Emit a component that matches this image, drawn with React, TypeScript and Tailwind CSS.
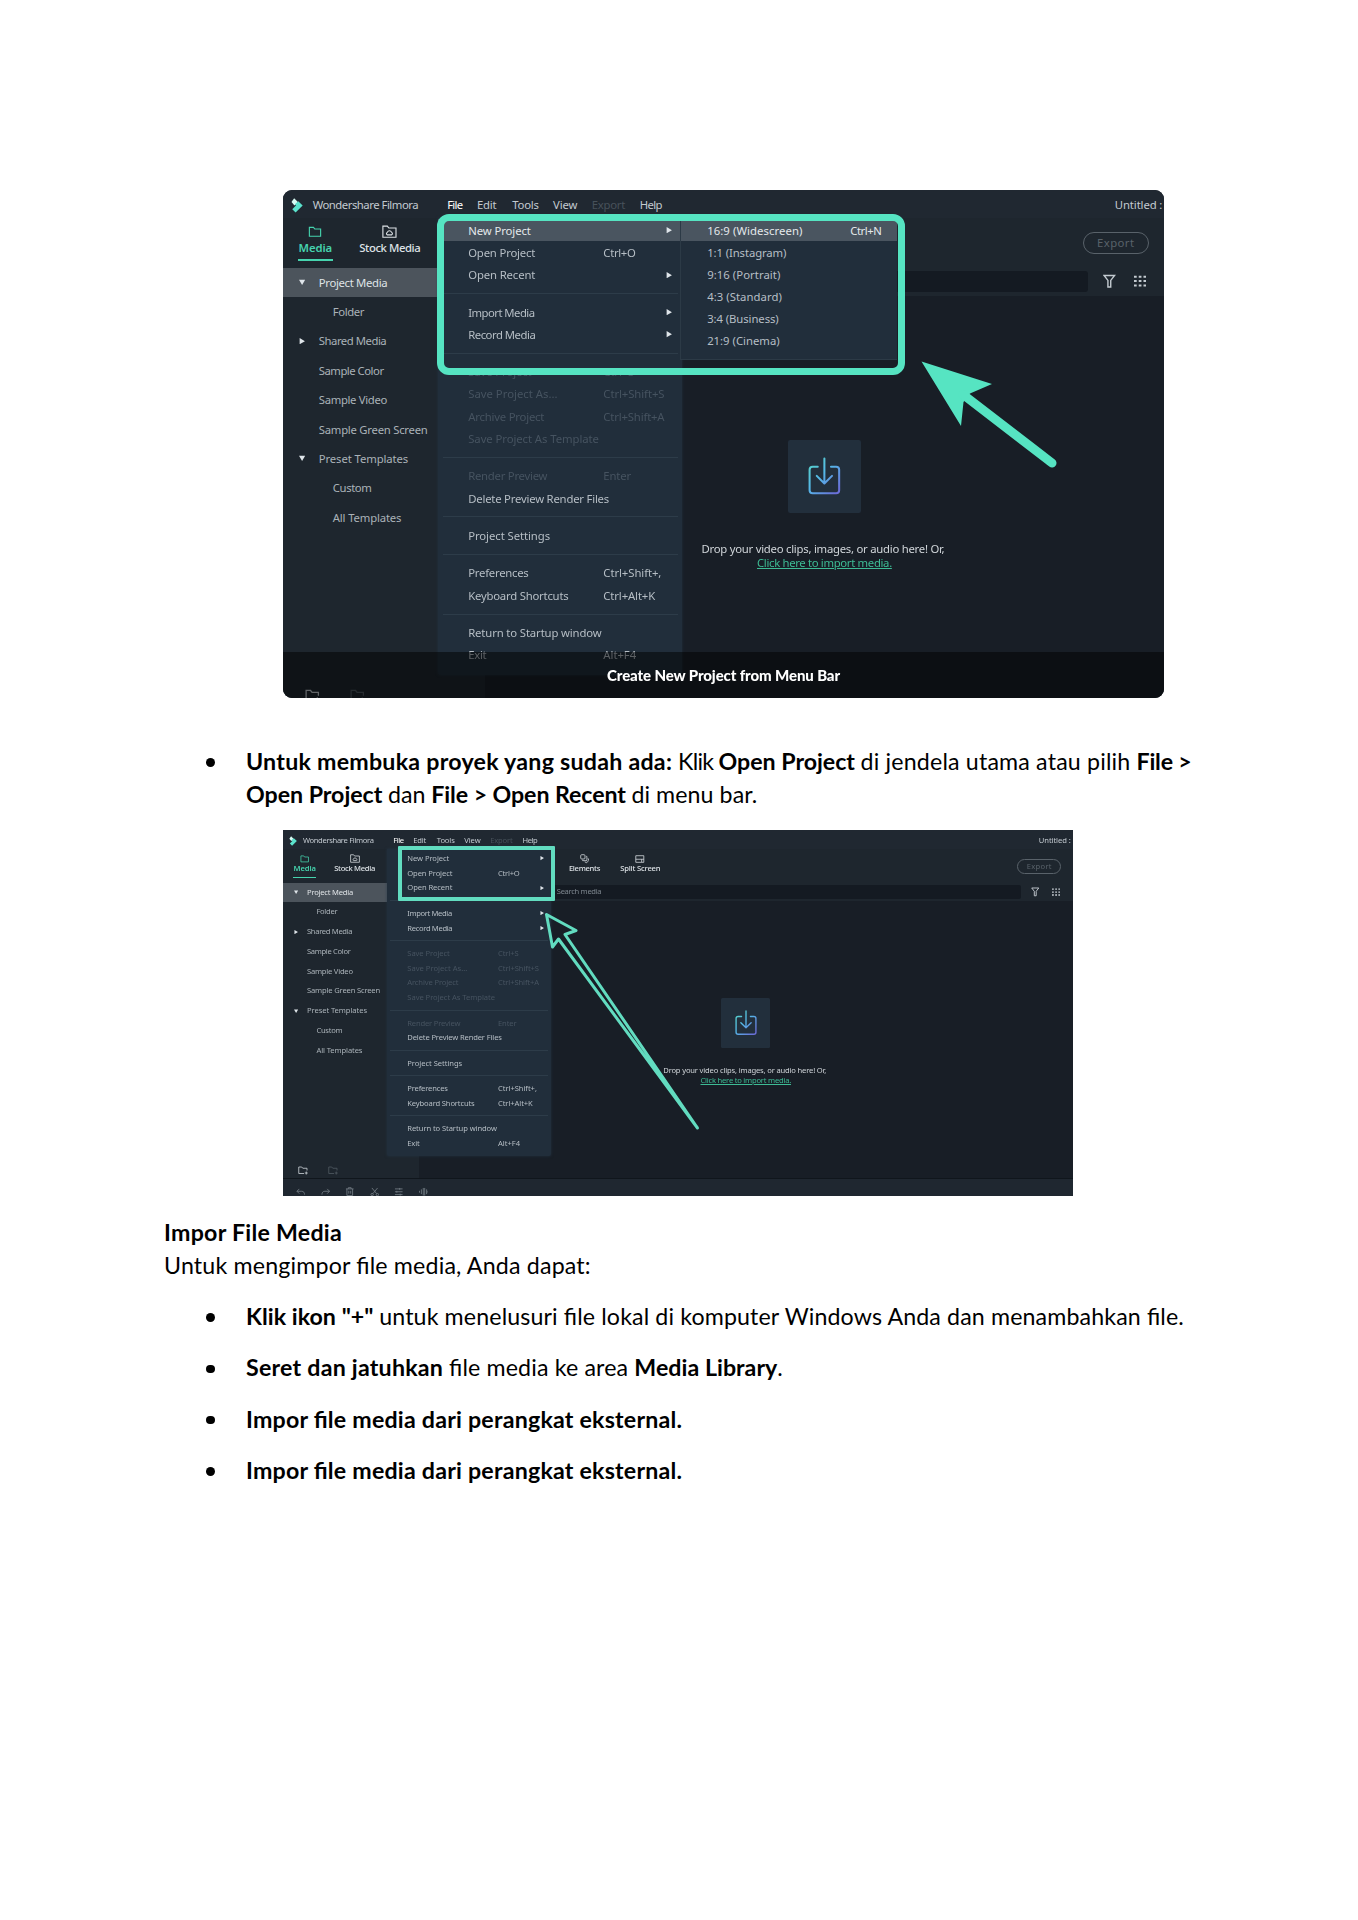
import React, { useLayoutEffect, useRef } from "react";

/* Text tracked so that it fills a width of `w` tenths of the parent's em. */
function Fit({ w, className = "", children }: { w: number; className?: string; children: string }) {
  const ref = useRef<HTMLSpanElement>(null);
  useLayoutEffect(() => {
    const el = ref.current;
    if (!el || !el.parentElement) return;
    const em = parseFloat(getComputedStyle(el.parentElement).fontSize);
    el.style.letterSpacing = "0px";
    const natural = el.getBoundingClientRect().width;
    el.style.letterSpacing = `${((w * em) / 10 - natural) / children.length}px`;
  }, [w, children]);
  return (
    <span ref={ref} className={`inline-block shrink-0 whitespace-pre ${className}`}>
      {children}
    </span>
  );
}

const UI = "text-[0.76em] leading-none";

type Entry = { label: string; w: number; keys?: string; kw?: number; sub?: boolean; dim?: boolean };

const MENU: Entry[][] = [
  [
    { label: "New Project", w: 42, sub: true },
    { label: "Open Project", w: 45, keys: "Ctrl+O", kw: 21.5 },
    { label: "Open Recent", w: 45, sub: true },
  ],
  [
    { label: "Import Media", w: 44.5, sub: true },
    { label: "Record Media", w: 45, sub: true },
  ],
  [
    { label: "Save Project", w: 42.5, keys: "Ctrl+S", kw: 20.7, dim: true },
    { label: "Save Project As...", w: 60, keys: "Ctrl+Shift+S", kw: 41, dim: true },
    { label: "Archive Project", w: 51, keys: "Ctrl+Shift+A", kw: 41, dim: true },
    { label: "Save Project As Template", w: 87.7, dim: true },
  ],
  [
    { label: "Render Preview", w: 53, keys: "Enter", kw: 18.5, dim: true },
    { label: "Delete Preview Render Files", w: 94.5 },
  ],
  [{ label: "Project Settings", w: 54.9 }],
  [
    { label: "Preferences", w: 40.5, keys: "Ctrl+Shift+,", kw: 38.9 },
    { label: "Keyboard Shortcuts", w: 67.3, keys: "Ctrl+Alt+K", kw: 34.7 },
  ],
  [
    { label: "Return to Startup window", w: 89.5 },
    { label: "Exit", w: 12.2, keys: "Alt+F4", kw: 22 },
  ],
];

const RATIOS: Entry[] = [
  { label: "16:9 (Widescreen)", w: 64, keys: "Ctrl+N", kw: 21 },
  { label: "1:1 (Instagram)", w: 53.2 },
  { label: "9:16 (Portrait)", w: 49.2 },
  { label: "4:3 (Standard)", w: 50.2 },
  { label: "3:4 (Business)", w: 48 },
  { label: "21:9 (Cinema)", w: 48.7 },
];

const TREE: { label: string; w: number; mark?: "down" | "right"; deep?: boolean }[] = [
  { label: "Project Media", w: 46, mark: "down" },
  { label: "Folder", w: 20.9, deep: true },
  { label: "Shared Media", w: 45.3, mark: "right" },
  { label: "Sample Color", w: 43.5 },
  { label: "Sample Video", w: 45.8 },
  { label: "Sample Green Screen", w: 73 },
  { label: "Preset Templates", w: 60, mark: "down" },
  { label: "Custom", w: 26, deep: true },
  { label: "All Templates", w: 46, deep: true },
];

function Tri({ dir, className = "" }: { dir: "down" | "right"; className?: string }) {
  return (
    <svg viewBox="0 0 10 10" className={`h-[0.42em] w-[0.42em] fill-[#dfe5ea] ${className}`}>
      <path d={dir === "down" ? "M0 1h10L5 9.5z" : "M1 0v10L9.5 5z"} />
    </svg>
  );
}

function Logo() {
  return (
    <svg viewBox="0 0 16 20" className="h-[1em] w-[0.82em]">
      <path d="M4 0.5 9 5.5 4.5 10 0.5 5.5z" fill="#d8fbf3" />
      <path d="M9.5 4.5 15.5 10.2 6 19.5 1.5 15 6.5 10 5 8.5z" fill="#5be3cd" />
    </svg>
  );
}

function FolderIcon({ className, plus }: { className: string; plus?: boolean }) {
  return (
    <svg viewBox="0 0 20 18" className={className} fill="none" stroke="currentColor" strokeWidth="1.7">
      {plus ? (
        <path d="M12 15H1.5V2h6l2 2.5h8.500V9M16.500 11v6M13.500 14h6" />
      ) : (
        <path d="M1.5 15.5V2h6.2l2 2.5h8.8v11z" />
      )}
    </svg>
  );
}

function StockIcon() {
  return (
    <svg viewBox="0 0 20 18" className="h-[0.9em] w-[1em]" fill="none" stroke="currentColor" strokeWidth="1.5">
      <path d="M1.2 16.5V1.5h6l2 2.5h9.6v12.500z" />
      <path d="M7 13.200a2 2 0 0 1 .3-3.600 2.900 2.900 0 0 1 5.400 0 2 2 0 0 1 .3 3.600z" />
    </svg>
  );
}

function Tab({ label, w, children, box, active }: { label: string; w: number; children: React.ReactNode; box: string; active?: boolean }) {
  return (
    <div className={`flex h-[2.45em] shrink-0 flex-col items-center ${box} ${active ? "text-[#46d3ae]" : "text-[#dde2e6]"}`}>
      <div className="flex h-[1.02em] items-center">{children}</div>
      <div className="mt-[0.14em] flex h-[0.78em] items-center">
        <Fit w={w} className={`${UI} ${active ? "font-semibold" : "font-medium"}`}>{label}</Fit>
      </div>
      {active && <div className="mt-[0.35em] h-[0.15em] w-full shrink-0 bg-[#46d3ae]" />}
    </div>
  );
}

function FileMenu({ highlight }: { highlight: boolean }) {
  return (
    <div className={`absolute left-[10.43em] top-[1.93em] flex h-[30.7em] w-[16.35em] flex-col rounded-b-[0.2em] bg-[#212e3b] shadow-[0_0_3px_rgba(40,60,76,0.7)] ${highlight ? "pt-[0.1em]" : "pt-[0.17em]"}`}>
      {MENU.map((group, g) => (
        <React.Fragment key={g}>
          {g > 0 && (
            <div className="flex h-[1.02em] shrink-0 items-center">
              <div className="mx-[0.3em] h-px flex-1 bg-[#2d3c49]" />
            </div>
          )}
          {group.map((e, i) => (
            <div
              key={e.label}
              className={`flex h-[1.493em] shrink-0 items-center pl-[2em] ${
                highlight && g === 0 && i === 0 ? "bg-[#4a5560] text-[#e4e8eb]" : e.dim ? "text-[#465360]" : "text-[#b6bec5]"
              }`}
            >
              <div className="flex w-[9.07em] shrink-0">
                <Fit w={e.w} className={UI}>{e.label}</Fit>
              </div>
              {e.keys && <Fit w={e.kw!} className={UI}>{e.keys}</Fit>}
              {e.sub && <Tri dir="right" className="ml-[4.22em]" />}
            </div>
          ))}
        </React.Fragment>
      ))}
    </div>
  );
}

function RatioMenu() {
  return (
    <div className="absolute left-[26.62em] top-[1.93em] flex h-[9.57em] w-[14.6em] flex-col border-b border-l border-[#2c3a46] bg-[#212e3b] pt-[0.1em]">
      {RATIOS.map((e, i) => (
        <div
          key={e.label}
          className={`flex h-[1.482em] shrink-0 items-center pl-[1.78em] ${i === 0 ? "bg-[#4a5560] text-[#e4e8eb]" : "text-[#b6bec5]"}`}
        >
          <div className="flex w-[9.6em] shrink-0">
            <Fit w={e.w} className={UI}>{e.label}</Fit>
          </div>
          {e.keys && <Fit w={e.kw!} className={UI}>{e.keys}</Fit>}
        </div>
      ))}
    </div>
  );
}

function EditTool({ children }: { children: React.ReactNode }) {
  return (
    <svg viewBox="0 0 20 20" className="h-[0.95em] w-[0.95em] text-[#737c84]" fill="none" stroke="currentColor" strokeWidth="1.8">
      {children}
    </svg>
  );
}

function FilmoraWindow({ ratios, id }: { ratios: boolean; id: string }) {
  return (
    <div className="relative flex h-[36.6em] w-full flex-col bg-[#1e262e] font-['Noto_Sans','Open_Sans',sans-serif] blur-[0.35px]">
      {/* title bar */}
      <div className="flex h-[1.93em] shrink-0 items-center bg-[#202831] pl-[0.55em] pt-[0.24em] text-[#c3cad0]">
        <Logo />
        <div className="ml-[0.62em] flex w-[9.03em] shrink-0"><Fit w={70.8} className={UI}>Wondershare Filmora</Fit></div>
        <div className="flex w-[2em] shrink-0 text-white"><Fit w={10.3} className={UI}>File</Fit></div>
        <div className="flex w-[2.37em] shrink-0"><Fit w={13} className={UI}>Edit</Fit></div>
        <div className="flex w-[2.73em] shrink-0"><Fit w={17.8} className={UI}>Tools</Fit></div>
        <div className="flex w-[2.6em] shrink-0"><Fit w={16.4} className={UI}>View</Fit></div>
        <div className="flex w-[3.23em] shrink-0 text-[#47515a]"><Fit w={22.4} className={UI}>Export</Fit></div>
        <Fit w={14.8} className={UI}>Help</Fit>
        <div className={`ml-auto flex shrink-0 ${ratios ? "w-[3.3em]" : "w-[3.42em]"}`}><Fit w={31.8} className={UI}>Untitled :</Fit></div>
      </div>

      {/* tabs */}
      <div className="flex h-[3.34em] shrink-0 pt-[0.45em]">
        <Tab label="Media" w={22.5} box="ml-[1em] w-[2.34em]" active><FolderIcon className="h-[0.8em] w-[0.94em]" /></Tab>
        <Tab label="Stock Media" w={40.9} box="ml-[1.79em] w-[4.07em]"><StockIcon /></Tab>
        {!ratios && (
          <>
            <Tab label="Elements" w={31.2} box="ml-[19.4em] w-[3.1em]">
              <svg viewBox="0 0 20 20" className="h-[0.95em] w-[0.95em]" fill="none" stroke="currentColor" strokeWidth="1.6">
                <rect x="1.500" y="1.500" width="9" height="9" rx="2" />
                <path d="M13 5h1.500v9H5.500v-2M17 9l1.500 4.500-4.500 5-4-2" />
              </svg>
            </Tab>
            <Tab label="Split Screen" w={40.2} box="ml-[2.03em] w-[4em]">
              <svg viewBox="0 0 20 18" className="h-[0.85em] w-[0.96em]" fill="none" stroke="currentColor" strokeWidth="1.6">
                <path d="M1.500 1.500h17v14h-17zM1.500 9h17M14 9v6" />
              </svg>
            </Tab>
          </>
        )}
        <div className={`ml-auto mt-[0.52em] flex h-[1.47em] w-[4.4em] items-center justify-center rounded-full border-[0.12em] border-[#59626a] text-[#59626a] ${ratios ? "mr-[1.04em]" : "mr-[1.17em]"}`}>
          <Fit w={25.2} className={UI}>Export</Fit>
        </div>
      </div>

      <div className="flex min-h-0 flex-1">
        {/* media tree */}
        <div className="flex w-[13.55em] shrink-0 flex-col">
          {TREE.map((t, i) => (
            <div key={t.label} className={`flex h-[1.973em] shrink-0 items-center ${i === 0 ? "bg-[#4c545c] text-[#dfe3e6]" : "text-[#aab2b8]"}`}>
              <div className={`flex shrink-0 pl-[1.05em] ${t.deep ? "w-[3.34em]" : "w-[2.4em]"}`}>{t.mark && <Tri dir={t.mark} />}</div>
              <Fit w={t.w} className={UI}>{t.label}</Fit>
            </div>
          ))}
          <div className="mt-auto flex gap-[1.97em] pb-[0.32em] pl-[1.5em]">
            <FolderIcon plus className="h-[0.9em] w-[1em] text-[#c4cbd0]" />
            <FolderIcon plus className="h-[0.9em] w-[1em] text-[#4e5860]" />
          </div>
        </div>

        {/* library */}
        <div className="flex min-w-0 flex-1 flex-col bg-[#181e26]">
          <div className="flex h-[1.88em] shrink-0 items-center bg-[#1e262e] text-[#c3cad0]">
            <div className="flex h-[1.46em] min-w-0 flex-1 items-center rounded-[0.2em] bg-[#141a22] pl-[13.83em] text-[#7d868e]">
              {!ratios && <Fit w={44.5} className={UI}>Search media</Fit>}
            </div>
            <svg viewBox="0 0 18 20" className="ml-[1em] h-[1em] w-[0.85em]" fill="none" stroke="currentColor" strokeWidth="2">
              <path d="M1.500 1.500h15L11 8.500V18H7V8.500z" />
            </svg>
            <svg viewBox="0 0 18 18" className={`ml-[1.25em] h-[0.82em] w-[0.82em] ${ratios ? "mr-[1.18em]" : "mr-[1.33em]"}`} fill="currentColor">
              <path d="M0 1h4v3H0zM7 1h4v3H7zM14 1h4v3h-4zM0 7.500h4v3H0zM7 7.500h4v3H7zM14 7.500h4v3h-4zM0 14h4v3H0zM7 14h4v3H7zM14 14h4v3h-4z" />
            </svg>
          </div>
          <div className="flex flex-1 flex-col items-center pt-[9.68em]">
            <div className="flex h-[4.93em] w-[4.93em] shrink-0 items-center justify-center rounded-[0.15em] bg-[#222f3c]">
              <svg viewBox="0 0 32 38" className="h-[2.6em] w-[2.2em]" fill="none" strokeWidth="2" strokeLinecap="round" strokeLinejoin="round">
                <defs>
                  <linearGradient id={id} x1="0" y1="0" x2="32" y2="30" gradientUnits="userSpaceOnUse">
                    <stop offset="0" stopColor="#56d8c0" />
                    <stop offset="0.5" stopColor="#55b8e8" />
                    <stop offset="1" stopColor="#6a6fd8" />
                  </linearGradient>
                </defs>
                <g stroke={`url(#${id})`}>
                  <path d="M9.500 9.500H4.500A3 3 0 0 0 1.500 12.500v20a3 3 0 0 0 3 3h23a3 3 0 0 0 3-3v-20a3 3 0 0 0-3-3h-5" />
                  <path d="M16.010 1.500 16 25.500M8.500 18.500 16 26l7.500-7.500" />
                </g>
              </svg>
            </div>
            <div className="mr-[0.2em] mt-[1.86em] flex h-[0.99em] items-center text-[#d0d5d9]"><Fit w={163} className={UI}>Drop your video clips, images, or audio here! Or,</Fit></div>
            <div className="flex h-[0.99em] items-center text-[#3dbb94]"><Fit w={90.5} className={`${UI} underline`}>Click here to import media.</Fit></div>
          </div>
        </div>
      </div>

      {/* timeline toolbar */}
      <div className="flex h-[1.8em] shrink-0 items-center gap-[1.51em] border-t border-[#10161c] bg-[#1f2730] pl-[1.3em] pt-[0.85em]">
        <EditTool><path d="M7 4 2 9l5 5M2 9h10c4 0 6 3 6 7" /></EditTool>
        <EditTool><path d="m13 4 5 5-5 5M18 9H8c-4 0-6 3-6 7" /></EditTool>
        <EditTool><path d="M2 4h16M7 4V1.500h6V4M4 4v14h12V4M8 8v6M12 8v6" /></EditTool>
        <EditTool><path d="m4 2 10 12M16 2 6 14" /><circle cx="4.500" cy="16" r="2.500" /><circle cx="15.500" cy="16" r="2.500" /></EditTool>
        <EditTool><path d="M2 4h16M2 10h16M2 16h16M12 2v4M6 8v4M13 14v4" /></EditTool>
        <EditTool><path d="M1 8v4M5 5v10M9 2v16M12 2v16M16 5v10M19 8v4" /></EditTool>
      </div>

      <FileMenu highlight={ratios} />
      {ratios && <RatioMenu />}
    </div>
  );
}

function Line({ children, className = "" }: { children: React.ReactNode; className?: string }) {
  return <div className={`flex h-[33px] items-start ${className}`}>{children}</div>;
}

const DOC = "text-[2.32em] leading-[33px] [font-feature-settings:'liga'_1]";

function B({ w, children }: { w: number; children: string }) {
  return <Fit w={w} className={`${DOC} font-bold`}>{children}</Fit>;
}
function R({ w, children }: { w: number; children: string }) {
  return <Fit w={w} className={DOC}>{children}</Fit>;
}

function Item({ children }: { children: React.ReactNode }) {
  return (
    <li className="flex">
      <div className="flex h-[33px] w-[82px] shrink-0 items-center pl-[42px] pt-0.5">
        <div className="h-[8.5px] w-[8.5px] rounded-full bg-black" />
      </div>
      <div>{children}</div>
    </li>
  );
}

export default function App() {
  return (
    <main className="min-h-[1920px] w-[1358px] bg-white pl-[164px] pt-[190px] font-['Lato','Liberation_Sans',sans-serif] text-[10px] text-black">
      <figure className="relative ml-[119px] h-[508px] w-[881px] overflow-hidden rounded-[9px] bg-[#1e262e] text-[14.9px]">
        <div className="-mt-px">
          <FilmoraWindow ratios id="drop-a" />
        </div>
        <div className="absolute left-[153.500px] top-[23.500px] h-[161px] w-[468.500px] rounded-[12px] border-[7.500px] border-[#56e4c2]" />
        <svg className="absolute left-0 top-0 h-[508px] w-[881px]" viewBox="0 0 881 508">
          <path d="M638.500 171.500 709 194 687 203.500 680.500 212 678 236z" fill="#56e4c2" />
          <path d="M680 204.500 769 273" stroke="#56e4c2" strokeWidth="9" strokeLinecap="round" />
        </svg>
        <figcaption className="absolute inset-x-0 bottom-0 flex h-[46px] justify-center bg-black/50 pt-[14px] text-[10px] text-white">
          <Fit w={233} className="text-[1.5em] font-black leading-[18px]">Create New Project from Menu Bar</Fit>
        </figcaption>
      </figure>

      <ul className="mt-[47px]">
        <Item>
          <Line>
            <B w={432}>{"Untuk membuka proyek yang sudah ada: "}</B>
            <R w={40.6}>{"Klik "}</R>
            <B w={142}>{"Open Project "}</B>
            <R w={275.9}>{"di jendela utama atau pilih "}</R>
            <B w={55}>{"File >"}</B>
          </Line>
          <Line>
            <B w={142}>{"Open Project "}</B>
            <R w={43.3}>{"dan "}</R>
            <B w={200.1}>{"File > Open Recent "}</B>
            <R w={126}>di menu bar.</R>
          </Line>
        </Item>
      </ul>

      <figure className="relative ml-[119px] mt-[19px] h-[366px] w-[790px] overflow-hidden">
        <FilmoraWindow ratios={false} id="drop-b" />
        <div className="absolute left-[115px] top-[15.500px] h-[55px] w-[156.500px] rounded-[1px] border-4 border-[#62dcc0]" />
        <svg className="absolute left-0 top-0 h-[366px] w-[790px]" viewBox="0 0 790 366" fill="none" stroke="#62dcc0" strokeWidth="3" strokeLinejoin="round">
          <path d="M263.500 84.500 293 100.500 282 104.500 414.500 298 275.500 109 269.500 117z" />
        </svg>
      </figure>

      <Line className="mt-5"><B w={178}>Impor File Media</B></Line>
      <Line><R w={427}>Untuk mengimpor file media, Anda dapat:</R></Line>

      <ul className="mt-[18px] flex flex-col gap-[18.300px]">
        <Item>
          <Line>
            <B w={133.2}>{'Klik ikon "+" '}</B>
            <R w={805}>untuk menelusuri file lokal di komputer Windows Anda dan menambahkan file.</R>
          </Line>
        </Item>
        <Item>
          <Line>
            <B w={203}>{"Seret dan jatuhkan "}</B>
            <R w={185.5}>{"file media ke area "}</R>
            <B w={143}>Media Library</B>
            <R w={6}>.</R>
          </Line>
        </Item>
        <Item><Line><B w={436.5}>Impor file media dari perangkat eksternal.</B></Line></Item>
        <Item><Line><B w={436.5}>Impor file media dari perangkat eksternal.</B></Line></Item>
      </ul>
    </main>
  );
}
